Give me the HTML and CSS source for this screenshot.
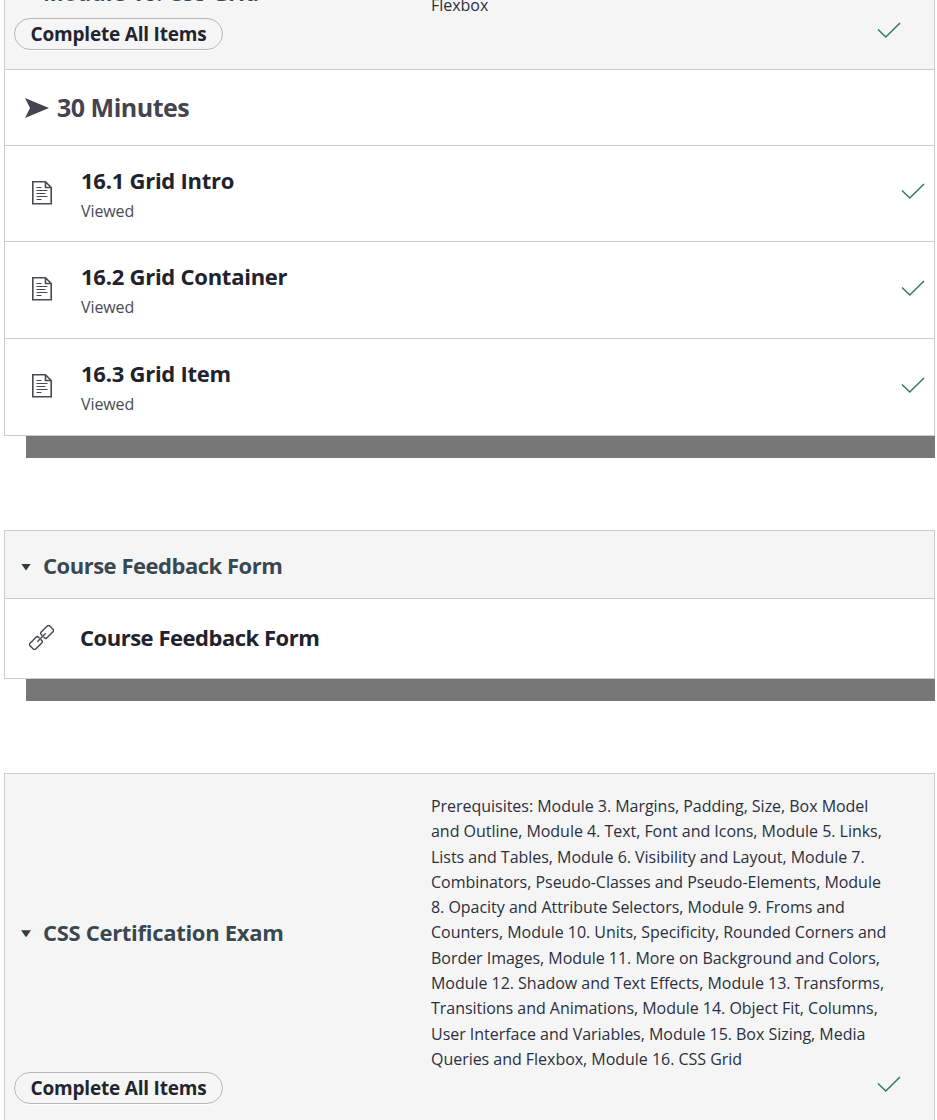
FILE: index.html
```
<!DOCTYPE html>
<html lang="en">
<head>
<meta charset="utf-8">
<title>Modules</title>
<link rel="stylesheet" href="styles.css">
</head>
<body>
<svg class="sprite" aria-hidden="true">
  <symbol id="check" viewBox="0 0 24 17"><path d="M1 7.5 8.8 15 23 1" fill="none" stroke="currentColor" stroke-width="1.5"/></symbol>
  <symbol id="page" viewBox="0 0 20 24"><path d="M.8.8H13.500L19.200 6.500V22.700H.8ZM13.500.8V6.500H19.200" fill="none" stroke="currentColor" stroke-width="1.600"/><path d="M4.500 6.500H9.500M4.500 9.500H15.500M4.500 12.500H13.500M4.500 15.500H15.500M4.500 18.500H9.500" fill="none" stroke="currentColor" stroke-width="1.200"/></symbol>
  <symbol id="link" viewBox="-1 -1 26 26"><g transform="rotate(-45 12 12)" fill="none" stroke="currentColor" stroke-width="1.500" stroke-linecap="round"><path d="M10 10.500V9.600Q10 7.800 8.200 7.800H-.7Q-2.500 7.800-2.500 9.600V14.400Q-2.500 16.200-.7 16.200H8.200Q10 16.200 10 14.400V13.500"/><path d="M14 10.500V9.600Q14 7.800 15.800 7.800H24.700Q26.500 7.800 26.500 9.600V14.400Q26.500 16.200 24.700 16.200H15.800Q14 16.200 14 14.400V13.500"/><path d="M6.500 12H17.500"/></g></symbol>
</svg>
<main class="modules">
  <section class="module module-first">
    <header class="head head-clipped">
      <div class="head-top">
        <h2 class="title"><span class="caret"></span><span>Module 16. CSS Grid</span></h2>
        <p class="prereqs"><span>Flexbox</span></p>
      </div>
      <div class="head-bottom"><span class="pill">Complete All Items</span><svg class="check"><use href="#check"/></svg></div>
    </header>
    <div class="row row-label"><svg class="arrow" viewBox="0 0 24 20"><path d="M0 0 24 10 0 20 5 10Z" fill="currentColor"/></svg><span class="label">30 Minutes</span></div>
    <div class="row item"><svg class="page"><use href="#page"/></svg><div class="text"><h3 class="name">16.1 Grid Intro</h3><p class="status">Viewed</p></div><svg class="check"><use href="#check"/></svg></div>
    <div class="row item item-tall"><svg class="page"><use href="#page"/></svg><div class="text"><h3 class="name">16.2 Grid Container</h3><p class="status">Viewed</p></div><svg class="check"><use href="#check"/></svg></div>
    <div class="row item item-tall"><svg class="page"><use href="#page"/></svg><div class="text"><h3 class="name">16.3 Grid Item</h3><p class="status">Viewed</p></div><svg class="check"><use href="#check"/></svg></div>
  </section>
  <div class="shade"></div>

  <section class="module">
    <header class="head head-plain">
      <h2 class="title title-tight"><span class="caret"></span><span>Course Feedback Form</span></h2>
    </header>
    <div class="row item item-link"><svg class="link"><use href="#link"/></svg><div class="text"><h3 class="name name-tight">Course Feedback Form</h3></div></div>
  </section>
  <div class="shade"></div>

  <section class="module">
    <header class="head head-full">
      <div class="head-top">
        <h2 class="title"><span class="caret"></span><span>CSS Certification Exam</span></h2>
        <p class="prereqs">
          <span>Prerequisites: Module 3. Margins, Padding, Size, Box Model</span>
          <span>and Outline, Module 4. Text, Font and Icons, Module 5. Links,</span>
          <span>Lists and Tables, Module 6. Visibility and Layout, Module 7.</span>
          <span>Combinators, Pseudo-Classes and Pseudo-Elements, Module</span>
          <span>8. Opacity and Attribute Selectors, Module 9. Froms and</span>
          <span>Counters, Module 10. Units, Specificity, Rounded Corners and</span>
          <span>Border Images, Module 11. More on Background and Colors,</span>
          <span>Module 12. Shadow and Text Effects, Module 13. Transforms,</span>
          <span>Transitions and Animations, Module 14. Object Fit, Columns,</span>
          <span>User Interface and Variables, Module 15. Box Sizing, Media</span>
          <span>Queries and Flexbox, Module 16. CSS Grid</span>
        </p>
      </div>
      <div class="head-bottom"><span class="pill">Complete All Items</span><svg class="check"><use href="#check"/></svg></div>
    </header>
  </section>
</main>
</body>
</html>
```
FILE: styles.css
```
* { box-sizing: border-box; }
html, body { margin: 0; height: 1120px; overflow: hidden; }
body { background: #fff; color: #273540; font-family: "Open Sans", "Noto Sans", sans-serif; }
h2, h3, p { margin: 0; }
.sprite { display: none; }
.modules { width: 931px; margin-left: 4px; }
.module { border: 1px solid #c7cdd1; }
.module-first { border-top: 0; }
.shade { height: 22px; margin: 0 0 72px 22px; background: #777; }

.head { background: #f5f5f5; border-bottom: 1px solid #c7cdd1; }
.head-clipped { height: 70px; display: flex; flex-direction: column; justify-content: flex-end; padding-bottom: 19px; }
.head-plain { height: 68px; display: flex; align-items: center; }
.head-plain .caret { margin-top: 5px; }
.head-full { height: 370px; padding-top: 20px; }
.head-top { display: grid; grid-template-columns: 426px 1fr; align-items: center; }
.head-clipped .head-top { height: 25px; grid-template-rows: 25px; align-items: end; flex: none; }
.head-clipped .title { margin-bottom: 11px; letter-spacing: 0; }
.head-bottom { display: flex; justify-content: space-between; align-items: center; height: 32px; padding: 0 33px 0 9px; flex: none; }
.head-bottom .check { margin-bottom: 7px; }

.title { display: flex; align-items: center; gap: 12px; padding-left: 16px; font-size: 22px; line-height: 30px; font-weight: 700; color: #394850; text-shadow: 0 1px #fff; white-space: nowrap; letter-spacing: -.3px; }
.title-tight { letter-spacing: -.48px; }
.caret { width: 10px; height: 7px; margin-top: 3px; background: #2d3b45; clip-path: polygon(0 0, 100% 0, 50% 100%); }
.head-full .title { margin-bottom: 2px; }
.prereqs { font-size: 16px; line-height: 25.3px; letter-spacing: -.03px; white-space: nowrap; color: #2a3040; }
.prereqs span { display: block; }
.pill { display: flex; align-items: center; justify-content: center; width: 209px; height: 32px; border: 1px solid #b5b5b5; border-radius: 16px; font-size: 19px; font-weight: 700; letter-spacing: -.2px; color: #22252f; white-space: nowrap; box-shadow: 0 1px #fff; }
.check { width: 24px; height: 17px; color: #2e7d55; flex: none; }

.row { display: flex; align-items: center; }
.row-label { height: 75px; padding-left: 20px; gap: 8px; color: #444450; }
.arrow { width: 24px; height: 20px; }
.label { font-size: 25px; font-weight: 700; letter-spacing: -.5px; margin-bottom: 2px; }
.item { height: 96px; border-top: 1px solid #c7cdd1; padding: 0 9px 0 27px; }
.item-tall { height: 97px; }
.item-link { height: 79px; border-top: 0; padding: 0 9px 3px 24px; }
.page { width: 20px; height: 24px; color: #484a55; margin: 0 28px 2px 0; flex: none; }
.link { width: 25px; height: 25px; color: #484a50; margin-right: 26px; flex: none; }
.text { flex: 1; padding-left: 1px; }
.item-link .text { padding-left: 0; }
.name { font-size: 22px; line-height: 30px; font-weight: 700; color: #20232d; letter-spacing: -.25px; }
.item-tall .text { margin-top: -1px; }
.name-tight { letter-spacing: -.48px; }
.status { font-size: 16px; line-height: 24px; margin-top: 4px; letter-spacing: -.1px; color: #454c55; }
.item .check { margin-bottom: 5px; }
.item-tall .check { margin-bottom: 3px; }
```
